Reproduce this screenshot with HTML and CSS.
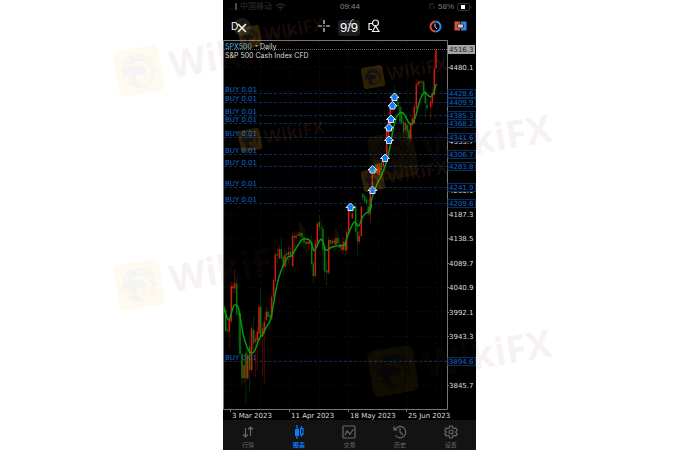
FILE: index.html
```html
<!DOCTYPE html>
<html lang="zh-CN">
<head>
<meta charset="utf-8">
<title>SPX500 Daily</title>
<link rel="stylesheet" href="styles.css">
</head>
<body>
<div class="stage">
  <main class="phone">
    <header class="status">
      <span class="carrier">
        <svg width="9" height="7" viewBox="0 0 9 7"><path d="M1 6h1M4 5v1" stroke="#222" fill="none"/><path d="M8 0v7" stroke="#4a4a4a" stroke-width="2"/></svg>
        中国移动
        <svg width="11" height="8" viewBox="0 0 11 8"><path d="M1 3q4.500-4 9 0M3 5q2.500-2 5 0" fill="none" stroke="#262626" stroke-width="1.500"/><circle cx="5.500" cy="6.500" r="1" fill="#262626"/></svg>
      </span>
      <time>09:44</time>
      <span class="battery">
        <svg width="6" height="7" viewBox="0 0 6 7"><path d="M5 1H1v5M5 3v3" fill="none" stroke="#333"/></svg>
        58%
        <svg width="15" height="8" viewBox="0 0 15 8"><rect x=".5" y=".5" width="12" height="7" rx="2" fill="none" stroke="#333"/><rect x="4" y="2" width="4" height="4" fill="#fff"/><path d="M14 3v2" stroke="#333"/></svg>
      </span>
    </header>
    <div class="toolbar">
      <div class="group left">
        <button class="close" type="button" aria-label="关闭"><svg width="18" height="18" viewBox="0 0 18 18"><circle cx="9" cy="9" r="9" fill="#1a1a1a"/><path d="M5 6l8 8M13 6l-8 8" stroke="#fff" stroke-width="1.600"/></svg></button>
        <button class="period" type="button">D1</button>
      </div>
      <div class="group middle">
        <button type="button" aria-label="十字光标"><svg width="14" height="14" viewBox="0 0 14 14"><path d="M7 1v4M7 9v4M1 7h4M9 7h4" stroke="#e8e8e8" stroke-width="1.200"/><path d="M6 7h2" stroke="#aaa"/></svg></button>
        <button class="counter" type="button">9/9<svg class="fn" width="8" height="14" viewBox="0 0 8 14"><path d="M2 6h5M4 7l1-4q1-2 3-1" fill="none" stroke="#bbb"/></svg></button>
        <button type="button" aria-label="图形"><svg width="14" height="14" viewBox="0 0 14 14"><path d="M5 4.500H2v6h3" fill="none" stroke="#eee" stroke-width="1.200"/><circle cx="8.500" cy="4" r="3" fill="#000" stroke="#eee" stroke-width="1.200"/><path d="M5.500 12.500l3-5.500 3.500 5.500z" fill="#000" stroke="#eee" stroke-width="1.200"/></svg></button>
      </div>
      <div class="group right">
        <button type="button" aria-label="时间"><svg width="13" height="13" viewBox="0 0 13 13"><path d="M6.500 1.500a5 5 0 0 0 0 10" fill="none" stroke="#e0503f" stroke-width="2"/><path d="M6.500 1.500a5 5 0 0 1 0 10" fill="none" stroke="#3187ee" stroke-width="2"/><path d="M6 3.500v3l2 2.500" fill="none" stroke="#ddd"/></svg></button>
        <button type="button" aria-label="下单"><svg width="13" height="10" viewBox="0 0 13 10"><path d="M.5 .5h6v9h-6z" fill="#e0503f"/><path d="M6.500 .5h6v9h-6z" fill="#3187ee"/><path d="M6 0h1v2H6zM6 8h1v2H6z" fill="#000"/><rect x="3.500" y="3" width="6" height="4" rx="1" fill="#ccc" stroke="#333"/></svg></button>
      </div>
    </div>
    <svg class="chart" id="chart" viewBox="223 39 253 381"></svg>
    <nav class="tabs">
      <a href="#quotes"><svg width="14" height="14" viewBox="0 0 14 14"><path d="M4.500 3v9M2 9.500l2.500 2.500L7 9.500M9.500 11V2M7 4.500L9.500 2 12 4.500" /></svg>行情</a>
      <a href="#chart" class="active"><svg width="14" height="14" viewBox="0 0 14 14"><path d="M5 0v14M9.500 1v2M9.500 10v2"/><rect x="3" y="4" width="4" height="7" fill="#0a7aff" stroke="none"/><rect x="8.500" y="3.500" width="2.500" height="6"/></svg>图表</a>
      <a href="#trade"><svg width="14" height="14" viewBox="0 0 14 14"><rect x="1" y="1" width="12" height="12" rx="1"/><path d="M3 10l2-4 3 3 3.500-5"/></svg>交易</a>
      <a href="#history"><svg width="14" height="14" viewBox="0 0 14 14"><path d="M2.500 10.500A5.700 5.700 0 1 0 2 4.500M1 1.500v3.500h3.500M7 3v4l3 3"/></svg>历史</a>
      <a href="#settings"><svg width="14" height="14" viewBox="0 0 14 14"><path d="M5.700 1h2.600l.5 1.900 1.200.7 1.900-.6 1.300 2.300L11.800 6.700v.8l1.400 1.300-1.300 2.300-1.900-.6-1.200.7L8.300 13H5.700l-.5-1.800-1.200-.7-1.900.6L.8 8.800l1.400-1.300v-.8L.8 5.300 2.100 3l1.900.6 1.200-.7z"/><circle cx="7" cy="7" r="2"/></svg>设置</a>
    </nav>
  </main>
  <svg class="watermarks" viewBox="0 0 700 450" aria-hidden="true">
    <defs>
      <g id="mark">
        <mask id="blades"><rect x="-24" y="-24" width="48" height="48" fill="#fff"/><path d="M-17-4Q-9-8-8-14M-4-18Q2-12 8-11M10-14Q11-5 17 0M17 4Q10 8 7 15" fill="none" stroke="#000" stroke-width="1.500"/></mask>
        <rect x="-23" y="-23" width="46" height="46" rx="6" fill="#ffb020"/>
        <path mask="url(#blades)" fill="#6c5868" fill-rule="evenodd" d="M-17 0A17 17 0 1 1 5 16Q12 10 12 1Q10-10 0-10Q-6-9-9-6Q-1-7 5-3Q9 0 8 3L4 1Q6 4 5 6L0 3Q-5 4-4 9Q-2 14 5 16Q-10 19-13 8L-8 9Q-13 4-11 2L-17 3z"/>
        <text x="31" y="13" class="brand">WikiFX</text>
      </g>
    </defs>
    <g class="large">
      <use href="#mark" transform="translate(139 71) rotate(-10)"/>
      <use href="#mark" transform="translate(139 285) rotate(-10)"/>
      <use href="#mark" transform="translate(393 156) rotate(-10)"/>
      <use href="#mark" transform="translate(393 371) rotate(-10)"/>
    </g>
    <g class="small">
      <use href="#mark" transform="translate(250 37) rotate(-10) scale(.47)"/>
      <use href="#mark" transform="translate(250 140) rotate(-10) scale(.47)"/>
      <use href="#mark" transform="translate(373 77) rotate(-10) scale(.47)"/>
      <use href="#mark" transform="translate(373 180) rotate(-10) scale(.47)"/>
    </g>
  </svg>
</div>
<script src="chart.js"></script>
</body>
</html>
```
FILE: styles.css
```css
* { box-sizing: border-box; }
body { margin: 0; background: #fff; font-family: "Liberation Sans", "Noto Sans CJK SC", sans-serif; }
.stage { position: relative; display: grid; grid-template-columns: 223fr 253fr 224fr; min-height: 100vh; }
.phone { grid-column: 2; display: grid; grid-template-rows: 13px 26px 1fr 30px; min-width: 0; background: #000; color: #fff; }
button { margin: 0; padding: 0; border: 0; background: none; color: inherit; font: inherit; display: flex; }
.status { display: grid; grid-template-columns: 1fr auto 1fr; align-items: center; padding: 0 4px 0 5px; font-size: 8px; line-height: 13px; color: #303030; }
.carrier, .battery { display: flex; align-items: center; gap: 3px; }
.battery { justify-content: flex-end; color: #777; }
.status time { color: #888; }
.toolbar { display: flex; align-items: center; justify-content: space-between; padding: 0 9px 0 8px; }
.group { display: flex; align-items: center; }
.left { width: 38px; position: relative; }
.period { position: relative; width: 7px; overflow: hidden; font-size: 10px; }
.close { position: absolute; left: 2px; top: -3px; }
.middle { gap: 7px; }
.right { gap: 12px; }
.counter { position: relative; justify-content: center; width: 22px; height: 16px; margin-top: 3px; border-radius: 3px; background: #1c1c1c; font-size: 13px; line-height: 16px; }
.fn { position: absolute; left: 8px; top: -2px; }
.chart { display: block; width: 100%; height: 100%; min-height: 0; }
.chart text { font-family: "DejaVu Sans", sans-serif; font-size: 7px; fill: #ddd; }
.chart .title { font-family: Inter, "Liberation Sans", sans-serif; }
.chart .symbol { fill: #4bb4e8; }
.chart .buy { fill: #0e68d0; }
.chart .now { fill: #222; }
.grid { stroke: #0a0a0a; stroke-dasharray: 3 3; }
.level { stroke: #062d58; stroke-dasharray: 3 2; }
.tag { fill: #000; stroke: #062f60; }
.frame { fill: none; stroke: #777; }
.average { fill: none; stroke: #0a9c14; stroke-width: 1.4px; stroke-linejoin: round; }
.tabs { display: grid; grid-template-columns: repeat(5, 1fr); background: #131313; }
.tabs a { display: flex; flex-direction: column; align-items: center; padding-top: 5px; gap: 1px; color: #686868; text-decoration: none; font-size: 6px; line-height: 10px; }
.tabs svg { fill: none; stroke: currentColor; stroke-width: 1.2px; }
.tabs .active { color: #0a7aff; font-weight: bold; }
.watermarks { position: absolute; inset: 0; width: 100%; height: 100%; pointer-events: none; }
.brand { font-family: "Open Sans", "Liberation Sans", sans-serif; font-weight: bold; font-size: 38px; fill: #7c3c2c; }
.large { opacity: .07; }
.small { opacity: .18; }
```
FILE: chart.js
```js
const chart = document.getElementById('chart');
const NS = 'http://www.w3.org/2000/svg';
function add(tag, attrs, text) {
  const el = document.createElementNS(NS, tag);
  for (const key in attrs) el.setAttribute(key, attrs[key]);
  if (text) el.textContent = text;
  chart.appendChild(el);
  return el;
}
const yOf = price => 214.5 + (4187.3 - price) * 0.501;

// Grid and scale
const steps = [];
for (let i = 0; i < 14; i++) steps.push(4480.1 - i * 48.8);
steps.forEach(p => {
  const y = Math.round(yOf(p)) - .5;
  add('path', { class: 'grid', d: `M224 ${y}H447` });
});
[230, 260, 289, 319, 348, 378, 407, 437].forEach(x => add('path', { class: 'grid', d: `M${x + .5} 41V410` }));

const levels = [4428.6, 4409.9, 4385.3, 4368.2, 4341.6, 4306.7, 4283.8, 4241.9, 4209.6, 3894.6];
levels.forEach(p => {
  const y = Math.floor(yOf(p)) + .5;
  add('path', { class: 'level', d: `M224 ${y}H447` });
  add('text', { class: 'buy', x: 225, y: y - 1.5 }, 'BUY 0.01');
});
add('path', { d: 'M224 49.500H447', stroke: '#666', 'stroke-dasharray': '1 1' });

// Candles: centre, high, body top, body bottom, low, rising; three units to the pixel
const early = [
  [10,335,340,365,370,1],[17,320,330,392,395,0],[22,370,388,392,400,0],[28,350,360,395,445,1],[34,245,258,365,370,1],[39,245,258,265,280,1],[44,208,250,265,280,1],[50,235,250,340,350,0],[55,315,340,345,440,0],[60,330,340,462,470,0],[66,440,462,535,555,0],[72,480,495,535,550,1],[78,440,458,535,610,0],[83,450,465,535,540,1],[89,410,440,510,575,0],[95,375,385,510,520,1],[101,350,390,430,450,0],[107,400,415,425,530,1],[112,380,395,420,510,1],[117,310,320,400,440,1],[122,265,320,410,425,0],[128,370,385,410,530,1],[133,350,365,400,550,1],[139,320,335,360,365,1],[144,325,335,350,380,0],[150,320,345,352,390,0],[155,280,290,355,360,1],[161,235,240,290,295,1],[166,160,163,242,250,1],[172,145,163,167,190,0],[178,135,147,175,180,1],[184,112,147,175,185,0],[190,165,170,200,220,0],[195,145,165,200,205,1],[200,155,160,165,200,0],[206,140,155,165,190,1],[212,145,155,170,180,0],[218,95,107,198,202,1],[223,98,107,112,175,0],[228,95,107,115,145,1],[234,94,103,107,110,0],[240,65,98,107,120,1],[246,75,98,112,140,0],[252,85,112,128,145,0],[258,115,125,132,160,0],[264,110,125,132,155,1],[269,120,124,130,150,1],[275,105,125,192,200,0],[280,180,190,228,250,0],[286,120,130,228,235,1],[292,65,70,135,145,1],[298,45,66,82,95,0],[304,60,82,86,110,0],[309,75,86,150,210,0],[314,130,145,215,230,0],[320,180,210,218,255,0],[326,110,120,218,225,1],[331,115,120,130,150,0],[337,115,122,130,150,1],[343,115,122,130,155,0],[348,83,113,135,150,1],[354,95,113,130,145,0],[360,120,132,145,155,0],[366,115,135,150,155,1],[371,110,125,150,160,1],[377,125,130,152,165,0]
];
const may = [
  [20,85,95,150,155,1],[26,5,15,95,100,1],[31,15,22,35,40,0],[37,30,40,55,58,1],[42,15,20,28,40,0],[47,10,18,95,105,0],[53,60,95,125,168,0],[58,90,108,125,135,1],[64,15,20,108,115,1],[85,0,20,40,50,0],[91,-15,-5,45,70,1]
];
const june = [
  [98,400,402,412,420,0],[104,400,408,425,430,0],[110,410,418,430,440,0],[121,385,390,450,480,1],[127,320,325,390,395,1],[133,295,325,338,350,0],[138,300,312,340,365,0],[143,300,312,340,365,1],[148,300,310,345,380,1],[154,300,308,330,345,0],[160,285,292,320,325,1],[165,280,290,300,340,1],[170,200,202,292,300,1],[175,172,175,240,250,1],[181,135,140,200,205,1],[187,100,110,150,155,1],[193,75,100,115,120,0],[198,90,110,125,145,0],[204,115,125,140,155,0],[210,130,140,185,195,0],[215,140,160,190,195,0],[221,175,185,215,235,0],[227,165,190,210,225,1],[232,185,195,215,240,0],[237,190,210,235,250,0],[242,185,190,237,245,1],[247,165,175,195,200,1],[253,130,140,190,195,1],[259,58,73,145,150,1],[265,58,65,75,80,1],[270,60,64,68,85,0],[276,60,65,68,90,1],[281,60,66,95,110,0],[286,85,95,130,165,0],[291,115,135,145,150,0],[302,115,125,142,180,1],[307,80,100,130,140,1],[313,-20,25,105,110,1],[318,-32,-31,25,30,1]
];
function candles(rows, ox, oy) {
  rows.forEach(([x, hi, top, bottom, lo, up]) => {
    const px = ox + x / 3, py = v => oy + v / 3;
    add('path', { d: `M${px} ${py(hi)}V${py(lo)}`, stroke: up ? '#7c1008' : '#07480c', 'stroke-width': .6 });
    add('path', { d: `M${px} ${py(top)}V${py(bottom)}`, stroke: up ? '#d01c0c' : '#08780f', 'stroke-width': 1.5 });
  });
}
candles(early, 220, 200);
candles(may, 340, 200);
candles(june, 330, 60);

// Moving average
const parts = [
  [220, 200, [[10,315],[18,345],[27,360],[34,340],[41,318],[48,315],[55,322],[62,360],[70,405],[80,438],[90,457],[100,457],[107,445],[118,415],[128,403],[140,380],[152,358],[160,315],[167,275],[175,238],[190,195],[204,171],[215,167],[225,150],[245,120],[256,117],[268,120],[275,132],[283,152],[298,123],[306,120],[318,150],[330,144],[345,139],[375,135]]],
  [340, 200, [[15,132],[22,110],[42,67],[56,78],[68,50],[80,38],[88,35],[95,15]]],
  [330, 60, [[119,450],[130,400],[145,365],[155,345],[168,310],[180,260],[190,205],[200,170],[212,157],[222,162],[238,190],[248,190],[258,165],[270,120],[283,97],[295,107],[303,110],[312,95],[319,72]]]
];
const line = parts.flatMap(([ox, oy, pts]) => pts.map(([x, y]) => [ox + x / 3, oy + y / 3]));
let d = `M${line[0]}`;
for (let i = 0; i < line.length - 1; i++) {
  const a = line[Math.max(i - 1, 0)], b = line[i], c = line[i + 1], e = line[Math.min(i + 2, line.length - 1)];
  d += `C${b[0] + (c[0] - a[0]) / 6} ${b[1] + (c[1] - a[1]) / 6} ${c[0] - (e[0] - b[0]) / 6} ${c[1] - (e[1] - b[1]) / 6} ${c}`;
}
add('path', { class: 'average', d });

// Entry arrows
[[350.5,207],[372.5,190],[372.5,169.500],[385,158],[389,140],[389,127.500],[391,119],[392.500,105.500],[394.500,97]].forEach(([x, y]) =>
  add('path', { d: `M${x} ${y - 4}l4.500 4.500h-2v3h-5v-3h-2z`, fill: '#0a7aff', stroke: '#dde8f4', 'stroke-width': 1 }));

// Frame and axes
add('path', { class: 'frame', d: 'M223.500 40.500H447.500V409.500H223.500Z' });
steps.forEach(p => {
  const y = yOf(p);
  add('path', { class: 'frame', d: `M447 ${Math.floor(y) + .5}h2` });
  if (![4431.3, 4382.5, 4284.9].includes(+p.toFixed(1))) add('text', { x: 449, y: y + 2.5 }, p.toFixed(1));
});
levels.forEach(p => {
  const y = Math.floor(yOf(p)) + .5;
  add('rect', { class: 'tag', x: 448, y: y - 4, width: 27.5, height: 8 });
  add('text', { class: 'buy', x: 449, y: y + 2.5 }, p.toFixed(1));
});
add('rect', { x: 448, y: 45, width: 27, height: 9, fill: '#a5a5a5' });
add('text', { class: 'now', x: 449, y: 52 }, '4516.3');
[[230,'3 Mar 2023'],[289,'11 Apr 2023'],[348,'18 May 2023'],[406,'25 Jun 2023']].forEach(([x, label]) => {
  add('path', { class: 'frame', d: `M${x + .5} 409v3` });
  add('text', { x: x + 2, y: 417.5 }, label);
});
add('text', { class: 'title symbol', x: 225, y: 48.500 }, 'SPX500');
add('path', { d: 'M255 45h3l-1.500 2z', fill: '#4bb4e8' });
add('text', { class: 'title', x: 260, y: 48.500 }, 'Daily');
add('text', { class: 'title', x: 225, y: 57.500 }, 'S&P 500 Cash Index CFD');
```
